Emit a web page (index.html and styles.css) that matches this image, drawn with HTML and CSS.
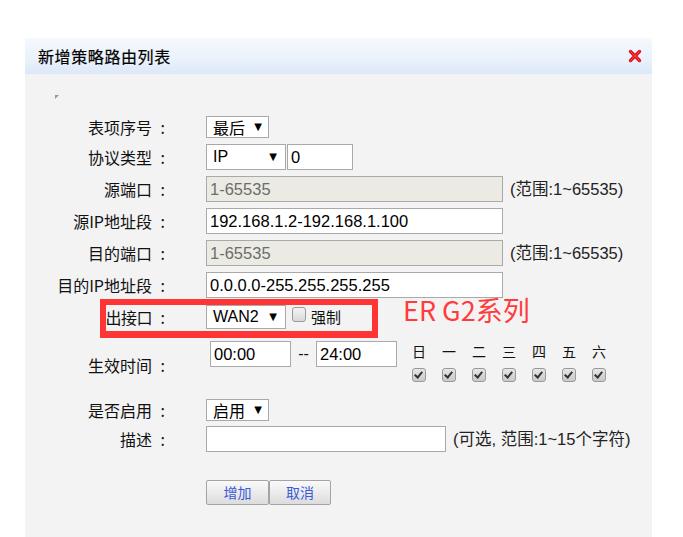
FILE: index.html
```html
<!DOCTYPE html>
<html lang="zh">
<head>
<meta charset="utf-8">
<title>新增策略路由列表</title>
<link rel="stylesheet" href="styles.css">
</head>
<body>
<div class="dialog">
  <div class="dlg-head">
    <span class="dlg-title">新增策略路由列表</span>
    <svg class="close" width="14" height="14" viewBox="0 0 14 14">
      <path d="M2.5 2.5 L11.5 11.5 M11.5 2.5 L2.5 11.5" stroke="#e0141c" stroke-width="3.4" stroke-linecap="round"/>
      <path d="M2.5 2.5 L11.5 11.5 M11.5 2.5 L2.5 11.5" stroke="#ff6a6a" stroke-width="1" stroke-linecap="round" opacity="0.6"/>
    </svg>
  </div>
  <div class="dlg-body">
    <span class="corner"></span>
    <div class="form">
      <div class="row r1">
        <label class="lbl">表项序号<span class="colon">:</span></label>
        <div class="ctl"><span class="sel w63">最后<span class="arr">▼</span></span></div>
      </div>
      <div class="row r2">
        <label class="lbl">协议类型<span class="colon">:</span></label>
        <div class="ctl"><span class="sel w79 tall">IP<span class="arr">▼</span></span><input class="inp w65" value="0"></div>
      </div>
      <div class="row r3">
        <label class="lbl">源端口<span class="colon">:</span></label>
        <div class="ctl"><input class="inp wide" value="1-65535" disabled><span class="hint">(范围:1~65535)</span></div>
      </div>
      <div class="row r3">
        <label class="lbl">源IP地址段<span class="colon">:</span></label>
        <div class="ctl"><input class="inp wide" value="192.168.1.2-192.168.1.100"></div>
      </div>
      <div class="row r3">
        <label class="lbl">目的端口<span class="colon">:</span></label>
        <div class="ctl"><input class="inp wide" value="1-65535" disabled><span class="hint">(范围:1~65535)</span></div>
      </div>
      <div class="row r3">
        <label class="lbl">目的IP地址段<span class="colon">:</span></label>
        <div class="ctl"><input class="inp wide" value="0.0.0.0-255.255.255.255"></div>
      </div>
      <div class="row r7">
        <label class="lbl narrow">出接口<span class="colon">:</span></label>
        <div class="ctl"><span class="sel w79 mid">WAN2<span class="arr">▼</span></span><span class="cb"></span><span class="force">强制</span></div>
        <div class="mark"></div>
        <div class="note">ER G2系列</div>
      </div>
      <div class="row r8">
        <label class="lbl">生效时间<span class="colon">:</span></label>
        <div class="ctl top">
          <input class="inp time" value="00:00"><span class="dash">--</span><input class="inp time" value="24:00">
          <div class="days">
            <div class="day"><span>日</span><span class="cbx"></span></div>
            <div class="day"><span>一</span><span class="cbx"></span></div>
            <div class="day"><span>二</span><span class="cbx"></span></div>
            <div class="day"><span>三</span><span class="cbx"></span></div>
            <div class="day"><span>四</span><span class="cbx"></span></div>
            <div class="day"><span>五</span><span class="cbx"></span></div>
            <div class="day"><span>六</span><span class="cbx"></span></div>
          </div>
        </div>
      </div>
      <div class="row r9">
        <label class="lbl">是否启用<span class="colon">:</span></label>
        <div class="ctl"><span class="sel w63">启用<span class="arr">▼</span></span></div>
      </div>
      <div class="row r10">
        <label class="lbl">描述<span class="colon">:</span></label>
        <div class="ctl"><input class="inp desc" value=""><span class="hint h2">(可选, 范围:1~15个字符)</span></div>
      </div>
      <div class="row btns">
        <div class="lbl"></div>
        <div class="ctl"><button class="btn">增加</button><button class="btn">取消</button></div>
      </div>
    </div>
  </div>
</div>
</body>
</html>
```
FILE: styles.css
```css
html, body {
  margin: 0;
  padding: 0;
  background: #ffffff;
  font-family: "Noto Sans CJK SC", "Liberation Sans", sans-serif;
  color: #111;
}

.dialog {
  margin: 38px 0 0 25px;
  width: 627px;
  height: 499px;
  background: #f3f3f3;
  display: flex;
  flex-direction: column;
}

.dlg-head {
  height: 36px;
  display: flex;
  align-items: center;
  justify-content: space-between;
  padding: 0 10px 0 13px;
  background: linear-gradient(to bottom, #f6f9fd 0%, #eaf1fa 60%, #dce8f8 100%);
}

.dlg-title {
  font-size: 16px;
  color: #000;
  letter-spacing: 0.6px;
  line-height: 20px;
  -webkit-text-stroke: 0.2px #000;
}

.close { display: block; }

.dlg-body {
  position: relative;
  flex: 1;
}

.corner {
  position: absolute;
  left: 30px;
  top: 21px;
  width: 0;
  height: 0;
  border-top: 4px solid #999;
  border-right: 4px solid transparent;
}

.form {
  padding-top: 42px;
  display: flex;
  flex-direction: column;
}

.row {
  display: flex;
  align-items: center;
  position: relative;
  margin-bottom: 6px;
}

.lbl {
  width: 145px;
  flex: none;
  text-align: right;
  font-size: 16px;
  line-height: 20px;
  color: #111;
  position: relative;
  z-index: 1;
}

.lbl.narrow { letter-spacing: -0.5px; }

.colon {
  display: inline-block;
  width: 18px;
  padding-right: 5px;
  box-sizing: border-box;
  text-align: right;
  letter-spacing: 0;
}

.ctl {
  margin-left: 36px;
  display: flex;
  align-items: center;
}

.ctl.top { align-items: flex-start; }

.r1 { height: 22px; }
.r2 { height: 26px; }
.r3 { height: 26px; }
.r7 { height: 24px; margin-top: 1px; margin-bottom: 12px; }
.r8 { height: 48px; margin-bottom: 9px; }
.r9 { height: 23px; margin-bottom: 5px; }
.r10 { height: 26px; margin-bottom: 28px; }
.btns { height: 24px; }

.sel {
  box-sizing: border-box;
  height: 22px;
  border: 1px solid #a9a9a9;
  background: #fff;
  display: flex;
  align-items: center;
  justify-content: space-between;
  padding: 0 6px 0 6px;
  font-size: 16px;
  color: #000;
  font-family: "Noto Sans CJK SC", "Liberation Sans", sans-serif;
  line-height: 20px;
}

.sel.tall { height: 26px; font-family: "Liberation Sans", sans-serif; }
.sel.mid { height: 24px; font-family: "Liberation Sans", sans-serif; }

.arr { font-size: 10px; font-family: "DejaVu Sans", sans-serif; margin-left: 4px; }
.w63 { width: 63px; }
.w79 { width: 80px; padding-right: 8px; }

.inp {
  box-sizing: border-box;
  height: 26px;
  border: 1px solid #a9a9a9;
  background: #fff;
  padding: 0 3px;
  margin: 0;
  font-family: "Liberation Sans", sans-serif;
  font-size: 16.5px;
  color: #000;
  outline: none;
}

.inp:disabled {
  background: #ebebe4;
  color: #6d6d6d;
}

.w65 { width: 66px; margin-left: 1px; }
.wide { width: 297px; }
.desc { width: 240px; }
.time { width: 81px; }

.hint {
  margin-left: 7px;
  font-size: 16.5px;
  color: #222;
  font-family: "Liberation Sans", "Noto Sans CJK SC", sans-serif;
  line-height: 20px;
}

.cb {
  width: 12px;
  height: 13px;
  border: 1px solid #9a9a9a;
  border-radius: 3px;
  background: linear-gradient(#f4f4f4, #d8d8d8);
  margin: 0 5px 6px 6px;
  box-sizing: content-box;
}

.force {
  font-size: 15px;
  line-height: 20px;
  color: #111;
}

.mark {
  position: absolute;
  left: 75px;
  top: -6px;
  width: 266px;
  height: 26px;
  border: 6px solid #ff3434;
  border-bottom-width: 7px;
  pointer-events: none;
}

.note {
  position: absolute;
  left: 378px;
  top: -13px;
  font-size: 27px;
  line-height: 36px;
  color: #ff3b3b;
  font-family: "Noto Sans CJK SC", sans-serif;
  white-space: nowrap;
}

.r8 .ctl { margin-left: 40px; height: 48px; }

.dash {
  font-family: "Liberation Sans", sans-serif;
  font-size: 16px;
  line-height: 26px;
  width: 25px;
  text-align: center;
}

.days {
  display: flex;
  margin-left: 15px;
}

.day {
  width: 30px;
  display: flex;
  flex-direction: column;
  align-items: flex-start;
}

.day span:first-child {
  font-size: 14px;
  line-height: 20px;
  width: 13px;
  text-align: center;
  color: #111;
}

.cbx {
  margin-top: 7px;
  width: 12px;
  height: 12px;
  border: 1px solid #9a9a9a;
  border-radius: 3px;
  background: linear-gradient(#e6e6e6, #c9c9c9);
  position: relative;
}

.cbx::after {
  content: "";
  position: absolute;
  left: 3px;
  top: 1px;
  width: 3px;
  height: 6px;
  border-right: 2.5px solid #333;
  border-bottom: 2.5px solid #333;
  transform: rotate(40deg);
}

.btn {
  box-sizing: border-box;
  width: 63px;
  height: 25px;
  border: 1px solid #a4a4a4;
  border-radius: 2px;
  background: linear-gradient(#fafafa, #dcdcdc);
  color: #3a5bd9;
  font-family: "Noto Sans CJK SC", sans-serif;
  font-size: 14px;
  padding: 0;
  margin: 0;
}

.btn + .btn { margin-left: 0; width: 62px; }
```
